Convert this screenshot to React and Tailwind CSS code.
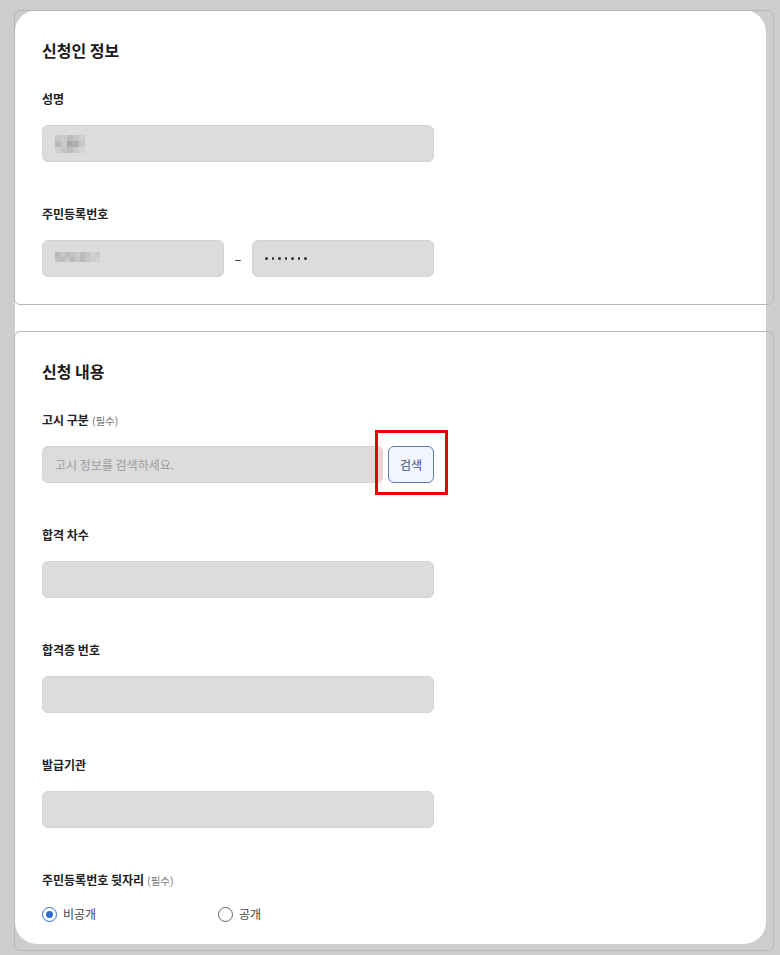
import React from "react";

const font = { fontFamily: '"Noto Sans CJK KR", "Noto Sans", sans-serif' };

function Label({ children, req }) {
  return (
    <div className="h-[20px] leading-[20px] text-[12px] font-semibold text-[#222]">
      {children}
      {req && <span className="ml-[3px] text-[10.5px] font-normal text-[#777]">(필수)</span>}
    </div>
  );
}

function Field({ className = "", children }) {
  return (
    <div className={"h-[37px] rounded-[6px] bg-[#dcdcdc] border border-[#d3d3d3] flex items-center px-[12px] " + className}>
      {children}
    </div>
  );
}

function Pixels({ cells, w, h, size }) {
  return (
    <svg width={w} height={h}>
      {cells.map((c, i) => (
        <rect key={i} x={c[0] * size} y={c[1] * size} width={size} height={size} fill={c[2]} />
      ))}
    </svg>
  );
}

const nameCells = [
  [0, 0, "#c8c8c8"], [1, 0, "#cbcbcb"], [2, 0, "#bcbcbc"], [3, 0, "#c6c6c6"], [4, 0, "#cfcfcf"],
  [0, 1, "#b9b9b9"], [1, 1, "#c9c9c9"], [2, 1, "#a9a9a9"], [3, 1, "#b0b0b0"], [4, 1, "#c8c8c8"],
  [0, 2, "#cfcfcf"], [1, 2, "#c4c4c4"], [2, 2, "#bdbdbd"], [3, 2, "#c9c9c9"], [4, 2, "#d3d3d3"],
];

const idCells = [
  [0, 0, "#b8b8b8"], [1, 0, "#c6c6c6"], [2, 0, "#bdbdbd"], [3, 0, "#c2c2c2"], [4, 0, "#c9c9c9"], [5, 0, "#b9b9b9"], [6, 0, "#c4c4c4"], [7, 0, "#d0d0d0"], [8, 0, "#c8c8c8"],
  [0, 1, "#c2c2c2"], [1, 1, "#bdbdbd"], [2, 1, "#c8c8c8"], [3, 1, "#b9b9b9"], [4, 1, "#c3c3c3"], [5, 1, "#bababa"], [6, 1, "#c6c6c6"], [7, 1, "#cdcdcd"], [8, 1, "#d2d2d2"],
];

function Radio({ checked, children }) {
  return (
    <div className="flex items-center gap-[6px]">
      <span
        className={
          "w-[15px] h-[15px] rounded-full flex items-center justify-center " +
          (checked ? "border-[1.5px] border-[#2f6bd0]" : "border border-[#666]")
        }
      >
        {checked && <span className="w-[7px] h-[7px] rounded-full bg-[#2f6bd0]" />}
      </span>
      <span className="text-[12px] text-[#444] leading-[20px]">{children}</span>
    </div>
  );
}

export default function App() {
  return (
    <div className="w-[780px] h-[955px] bg-[#cdcdcd] pt-[10px] pl-[14px]" style={font}>
      <div className="w-[760px] h-[942px] p-px">
        <div className="w-[751px] h-[934px] bg-white rounded-[22px]">
          {/* Card 1 */}
          <div className="-ml-px -mt-px w-[760px] h-[295px] border border-[#b9b9b9] rounded-[6px] px-[27px] pt-[27px]">
            <div className="h-[24px] leading-[24px] text-[16px] font-bold text-[#1a1a1a]">신청인 정보</div>
            <div className="mt-[27px]"><Label>성명</Label></div>
            <Field className="mt-[16px] w-[392px]">
              <Pixels cells={nameCells} w={30} h={18} size={6} />
            </Field>
            <div className="mt-[42px]"><Label>주민등록번호</Label></div>
            <div className="mt-[16px] flex items-center">
              <Field className="w-[182px]">
                <Pixels cells={idCells} w={45} h={14} size={5} />
              </Field>
              <div className="w-[28px] text-center text-[13px] text-[#333]">–</div>
              <Field className="w-[182px]">
                <div className="flex items-center gap-[4px]">
                  {[0, 1, 2, 3, 4, 5, 6].map((i) => (
                    <span key={i} className="w-[2.5px] h-[2.5px] rounded-full bg-[#333]" />
                  ))}
                </div>
              </Field>
            </div>
          </div>

          {/* Card 2 */}
          <div className="-ml-px mt-[26px] w-[760px] h-[620px] border border-[#b9b9b9] rounded-[6px] px-[27px] pt-[27px]">
            <div className="h-[24px] leading-[24px] text-[16px] font-bold text-[#1a1a1a]">신청 내용</div>
            <div className="mt-[27px]"><Label req>고시 구분</Label></div>
            <div className="mt-[16px] flex items-center gap-[5px] w-[392px]">
              <Field className="w-[341px]">
                <span className="text-[12px] text-[#9d9d9d]">고시 정보를 검색하세요.</span>
              </Field>
              <div className="relative">
                <button className="w-[46px] h-[37px] rounded-[6px] border border-[#5b7db5] bg-[#f1f6fc] text-[12px] text-[#3f5273]">
                  검색
                </button>
                <div className="absolute left-[-13px] top-[-16px] w-[73px] h-[65px] border-[3px] border-[#e60000]" />
              </div>
            </div>
            <div className="mt-[42px]"><Label>합격 차수</Label></div>
            <Field className="mt-[16px] w-[392px]" />
            <div className="mt-[42px]"><Label>합격증 번호</Label></div>
            <Field className="mt-[16px] w-[392px]" />
            <div className="mt-[42px]"><Label>발급기관</Label></div>
            <Field className="mt-[16px] w-[392px]" />
            <div className="mt-[42px]"><Label req>주민등록번호 뒷자리</Label></div>
            <div className="mt-[14px] flex items-center">
              <div className="w-[176px]"><Radio checked>비공개</Radio></div>
              <Radio>공개</Radio>
            </div>
          </div>
        </div>
      </div>
    </div>
  );
}
